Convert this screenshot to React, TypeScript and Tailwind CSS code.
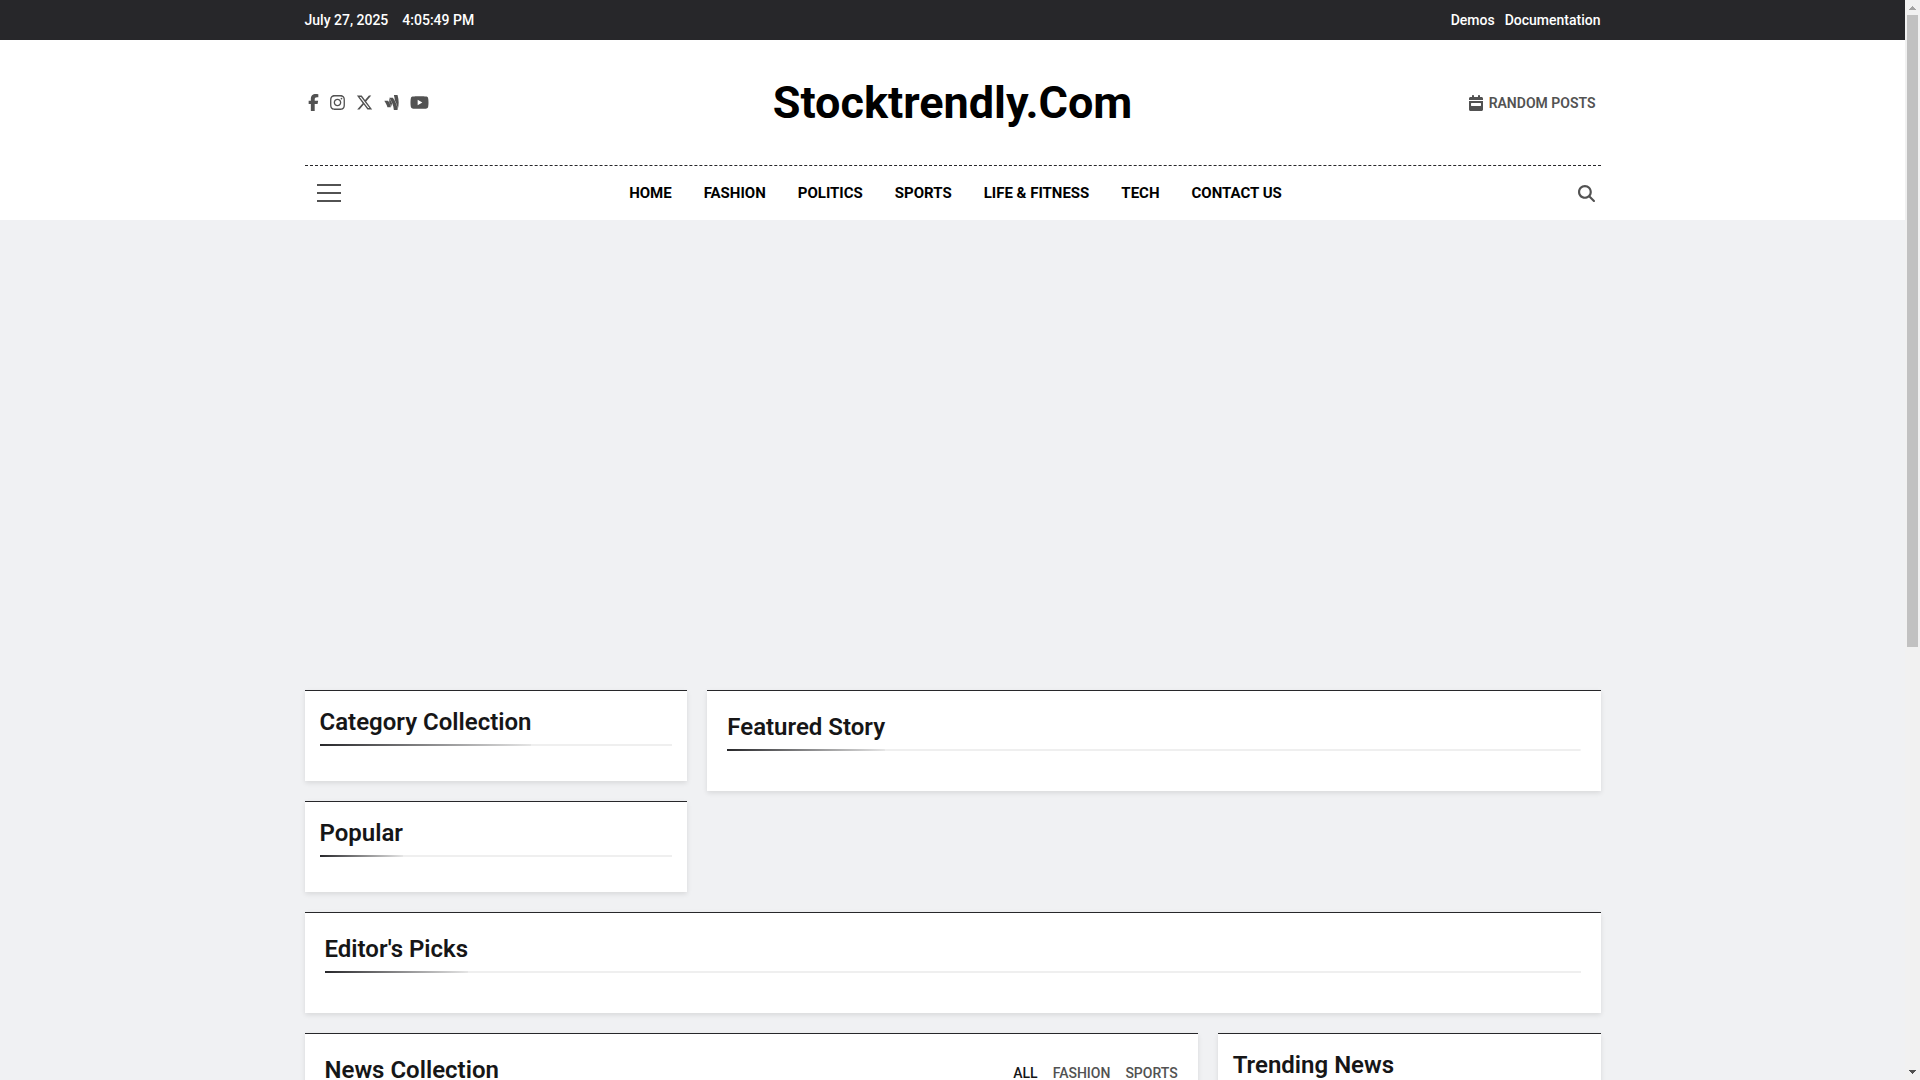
import { useState } from "react";
import type { ReactNode } from "react";
import {
  FaCalendarWeek,
  FaFacebookF,
  FaGoogleWallet,
  FaInstagram,
  FaMagnifyingGlass,
  FaXTwitter,
  FaYoutube,
} from "react-icons/fa6";

const socials = [
  { label: "Facebook", icon: FaFacebookF, width: "w-[11px]" },
  { label: "Instagram", icon: FaInstagram, width: "w-[15px]" },
  { label: "X", icon: FaXTwitter, width: "w-[17px]" },
  { label: "Google Wallet", icon: FaGoogleWallet, width: "w-[15px]" },
  { label: "YouTube", icon: FaYoutube, width: "w-[19px]" },
];

const menu = ["Home", "Fashion", "Politics", "Sports", "Life & Fitness", "Tech", "Contact Us"];

const tabs = ["All", "Fashion", "Sports"];

type PanelProps = {
  title: string;
  compact?: boolean;
  aside?: ReactNode;
};

function Panel({ title, compact, aside }: PanelProps) {
  return (
    <section
      className={`border-t border-[#27272a] bg-white shadow-[0_2px_5px_rgba(0,0,0,0.1)] ${
        compact ? "p-[15px]" : "p-5"
      }`}
    >
      <div className="mb-5 flex items-end justify-between bg-[linear-gradient(#efefef,#efefef)] bg-[length:100%_2px] bg-bottom bg-no-repeat">
        <h2 className="bg-[linear-gradient(to_right,#27272a,#e5e5e5)] bg-[length:100%_2px] bg-bottom bg-no-repeat pb-2 text-2xl leading-8 font-semibold text-[#161617]">
          {title}
        </h2>
        {aside}
      </div>
    </section>
  );
}

function CollectionTabs() {
  const [active, setActive] = useState("All");

  return (
    <div className="flex gap-[15px] pb-[9px] text-sm leading-6 font-medium">
      {tabs.map((tab) => (
        <button
          key={tab}
          type="button"
          onClick={() => setActive(tab)}
          className={`uppercase ${active === tab ? "text-[#161617]" : "text-[#525252]"}`}
        >
          {tab}
        </button>
      ))}
    </div>
  );
}

function ScrollRail() {
  return (
    <div className="flex w-[15px] shrink-0 flex-col items-center bg-[#f1f1f1]" aria-hidden="true">
      <svg className="h-[15px] w-[15px] shrink-0" viewBox="0 0 15 15" fill="#a3a3a3" shapeRendering="crispEdges">
        <path d="M7 6h1v1h1v1h1v1h1v1H4V9h1V8h1V7h1z" />
      </svg>
      <div className="flex w-full flex-1 flex-col px-0.5">
        <div className="h-[60.2%] bg-[#c1c1c1]"></div>
      </div>
      <svg className="h-[15px] w-[15px] shrink-0" viewBox="0 0 15 15" fill="#505050" shapeRendering="crispEdges">
        <path d="M4 5h7v1h-1v1H9v1H8v1H7V8H6V7H5V6H4z" />
      </svg>
    </div>
  );
}

export default function App() {
  return (
    <div className="flex h-screen overflow-hidden bg-[#f0f1f3] font-[Roboto,sans-serif]">
      <div className="min-w-0 flex-1 overflow-hidden">
        {/* Top bar */}
        <div className="bg-[#27272a] text-sm leading-10 font-medium text-white">
          <div className="mx-auto flex max-w-[1320px] justify-between px-3">
            <div className="flex gap-[14px]">
              <span>July 27, 2025</span>
              <time>4:05:49 PM</time>
            </div>
            <nav className="flex gap-[10px]">
              <a href="#demos">Demos</a>
              <a href="#documentation">Documentation</a>
            </nav>
          </div>
        </div>

        <header className="bg-white">
          <div className="mx-auto max-w-[1320px] px-3">
            {/* Branding row */}
            <div className="grid h-[125px] grid-cols-[1fr_auto_1fr] items-center">
              <div className="flex gap-[11px] pl-[3px] text-[#525252]">
                {socials.map(({ label, icon: Icon, width }) => (
                  <a key={label} href="#social" aria-label={label}>
                    <Icon className={`h-[17px] ${width}`} />
                  </a>
                ))}
              </div>
              <a href="#home" className="text-[45px] leading-[60px] font-bold text-black">
                Stocktrendly.Com
              </a>
              <a
                href="#random"
                className="flex items-center gap-[6px] justify-self-end pr-[5px] text-sm font-semibold text-[#525252] uppercase"
              >
                <FaCalendarWeek className="h-4 w-[14px]" />
                Random Posts
              </a>
            </div>

            {/* Menu row */}
            <div className="flex h-[55px] items-center justify-between border-t border-dashed border-[#27272a]">
              <button type="button" aria-label="Open menu" className="flex flex-col gap-[6px] px-3">
                <span className="h-0.5 w-6 bg-[#525252]"></span>
                <span className="h-0.5 w-6 bg-[#525252]"></span>
                <span className="h-0.5 w-6 bg-[#525252]"></span>
              </button>
              <nav className="flex gap-8 text-[15px] font-bold text-black uppercase">
                {menu.map((item) => (
                  <a key={item} href="#category">
                    {item}
                  </a>
                ))}
              </nav>
              <button type="button" aria-label="Search" className="pr-[5px] pl-5 text-[17px] text-[#525252]">
                <FaMagnifyingGlass />
              </button>
            </div>
          </div>
        </header>

        <main className="mx-auto flex max-w-[1320px] flex-col gap-5 px-3 pt-[470px]">
          <div className="grid grid-cols-[3fr_7fr] items-start gap-5">
            <div className="flex flex-col gap-5">
              <Panel title="Category Collection" compact />
              <Panel title="Popular" compact />
            </div>
            <Panel title="Featured Story" />
          </div>

          <Panel title="Editor's Picks" />

          <div className="grid grid-cols-[7fr_3fr] items-start gap-5">
            <Panel title="News Collection" aside={<CollectionTabs />} />
            <Panel title="Trending News" compact />
          </div>
        </main>
      </div>
      <ScrollRail />
    </div>
  );
}
